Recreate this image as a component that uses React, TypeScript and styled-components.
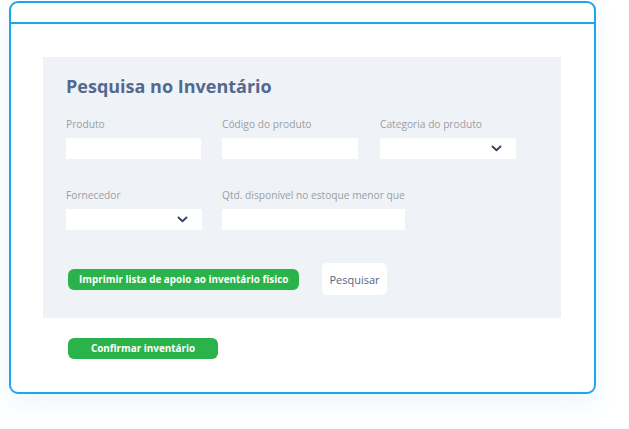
import styled, { createGlobalStyle } from "styled-components";

const GlobalStyle = createGlobalStyle`
    html, body {
        margin: 0;
        padding: 0;
        background: #ffffff;
        font-family: "Open Sans", "Lato", sans-serif;
    }
`

const Chevron = () => (
    <svg width="11" height="7" viewBox="0 0 11 7" fill="none">
        <path d="M1.5 1.5L5.5 5.2L9.5 1.5" stroke="#34435f" strokeWidth="1.9" strokeLinecap="round" strokeLinejoin="round" />
    </svg>
)

export default function App() {
    return (
        <>
            <GlobalStyle />
            <Page>
                <Window>
                    <TitleBar />
                    <Content>
                        <Panel>
                            <Title>Pesquisa no Inventário</Title>
                            <FieldRow>
                                <Field>
                                    <Label>Produto</Label>
                                    <Input />
                                </Field>
                                <Field>
                                    <Label>Código do produto</Label>
                                    <Input $width={136} />
                                </Field>
                                <Field>
                                    <Label>Categoria do produto</Label>
                                    <Select><Chevron /></Select>
                                </Field>
                            </FieldRow>
                            <FieldRow>
                                <Field>
                                    <Label>Fornecedor</Label>
                                    <Select><Chevron /></Select>
                                </Field>
                                <Field>
                                    <Label>Qtd. disponível no estoque menor que</Label>
                                    <Input $width={183} />
                                </Field>
                            </FieldRow>
                            <Actions>
                                <GreenButton>Imprimir lista de apoio ao inventário físico</GreenButton>
                                <SearchButton>Pesquisar</SearchButton>
                            </Actions>
                        </Panel>
                        <Footer>
                            <GreenButton $width={150}>Confirmar inventário</GreenButton>
                        </Footer>
                    </Content>
                </Window>
            </Page>
        </>
    )
}

const Page = styled.div`
    width: 629px;
    height: 429px;
    padding: 1px 0 0 9px;
    box-sizing: border-box;
`

const Window = styled.div`
    width: 587px;
    height: 393px;
    box-sizing: border-box;
    border: 2px solid #1ba7e8;
    border-radius: 9px;
    box-shadow: 0 10px 26px rgba(40, 150, 230, 0.09);
    overflow: hidden;
    display: flex;
    flex-direction: column;
`

const TitleBar = styled.div`
    height: 19px;
    border-bottom: 2px solid #1ba7e8;
    flex-shrink: 0;
`

const Content = styled.div`
    padding: 33px 0 0 32px;
`

const Panel = styled.section`
    width: 518px;
    height: 261px;
    box-sizing: border-box;
    background: #eff2f7;
    padding: 17px 0 0 23px;
    display: flex;
    flex-direction: column;
`

const Title = styled.h1`
    margin: 0 0 19px;
    font-size: 18px;
    line-height: 24px;
    font-weight: 700;
    color: #526a8f;
`

const FieldRow = styled.div`
    display: grid;
    grid-template-columns: 156px 158px auto;
    margin-bottom: 29px;
`

const Field = styled.div`
    display: flex;
    flex-direction: column;
`

const Label = styled.label`
    font-size: 10.2px;
    line-height: 12px;
    color: #9b9ea3;
    margin: 1px 0 8px;
    white-space: nowrap;
`

const Input = styled.div<{ $width?: number }>`
    width: ${p => p.$width ?? 135}px;
    height: 21px;
    background: #ffffff;
    border-radius: 1px;
`

const Select = styled.div`
    width: 136px;
    height: 21px;
    background: #ffffff;
    border-radius: 1px;
    display: flex;
    align-items: center;
    justify-content: flex-end;
    padding-right: 14px;
    box-sizing: border-box;
`

const Actions = styled.div`
    display: flex;
    align-items: center;
    gap: 23px;
    padding-left: 2px;
    margin-top: 4px;
`

const GreenButton = styled.button<{ $width?: number }>`
    width: ${p => (p.$width ? `${p.$width}px` : "auto")};
    height: 21px;
    padding: 0 11px;
    border: none;
    border-radius: 6px;
    background: #2bb34b;
    color: #ffffff;
    font-family: "Open Sans", sans-serif;
    font-size: 9.9px;
    font-weight: 700;
    white-space: nowrap;
`

const SearchButton = styled.button`
    height: 32px;
    padding: 0 7px;
    border: none;
    border-radius: 5px;
    background: #ffffff;
    color: #56647f;
    font-family: "Open Sans", sans-serif;
    font-size: 11px;
    font-weight: 500;
`

const Footer = styled.div`
    padding: 17px 0 0 25px;
`
